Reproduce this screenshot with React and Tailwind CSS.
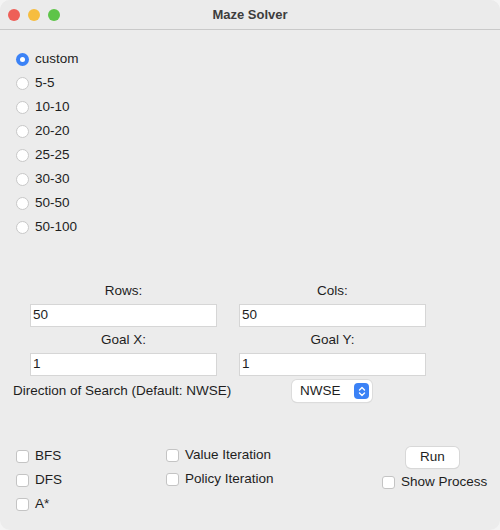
import { useState } from "react";

const sizes = ["custom", "5-5", "10-10", "20-20", "25-25", "30-30", "50-50", "50-100"];

function Radio({ checked }) {
  return checked ? (
    <span className="w-[13px] h-[13px] rounded-full bg-[#3b82f6] flex items-center justify-center shrink-0">
      <span className="w-[5px] h-[5px] rounded-full bg-white" />
    </span>
  ) : (
    <span className="w-[13px] h-[13px] rounded-full bg-white border border-[#c8c8c8] shrink-0" />
  );
}

function Check({ label, className = "" }) {
  return (
    <div className={"flex items-center h-[24px] " + className}>
      <span className="w-[13px] h-[13px] rounded-[3px] bg-white border border-[#c4c4c4] shrink-0" />
      <span className="ml-[6px]">{label}</span>
    </div>
  );
}

function Field({ label, value }) {
  return (
    <div className="flex flex-col items-center">
      <div className="h-[17px] leading-[17px]">{label}</div>
      <div className="w-[187px] h-[23px] mt-[5px] bg-white border border-[#d6d6d6] pl-[2px] flex items-center">
        {value}
      </div>
    </div>
  );
}

export default function App() {
  const [size, setSize] = useState("custom");

  return (
    <div className="w-[500px] h-[530px] bg-[#f4f4f4] font-['Liberation_Sans',Arial,sans-serif] text-[13.5px] text-[#1e1e1e]">
      <div className="w-full h-full bg-[#ececec] rounded-[10px] overflow-hidden flex flex-col">
        {/* barra de título */}
        <div className="h-[30px] border-b border-[#c9c9c9] bg-[#ebebeb] flex items-center relative shrink-0">
          <div className="flex gap-[8px] pl-[8px]">
            <span className="w-[12px] h-[12px] rounded-full bg-[#ee5f58]" />
            <span className="w-[12px] h-[12px] rounded-full bg-[#f6bd3f]" />
            <span className="w-[12px] h-[12px] rounded-full bg-[#5ec449]" />
          </div>
          <div className="absolute inset-0 flex items-center justify-center font-bold text-[13px] text-[#3d3d3d]">
            Maze Solver
          </div>
        </div>

        {/* tamaños */}
        <div className="pl-[16px] pt-[17px] flex flex-col">
          {sizes.map((s) => (
            <div
              key={s}
              className="flex items-center h-[24px] cursor-default"
              onClick={() => setSize(s)}
            >
              <Radio checked={size === s} />
              <span className="ml-[6px]">{s}</span>
            </div>
          ))}
        </div>

        {/* filas / columnas / objetivo */}
        <div className="mt-[43px] grid grid-cols-[187px_187px] gap-x-[22px] gap-y-[4px] pl-[30px]">
          <Field label="Rows:" value="50" />
          <Field label="Cols:" value="50" />
          <Field label="Goal X:" value="1" />
          <Field label="Goal Y:" value="1" />
        </div>

        <div className="flex items-center mt-[3px] pl-[13px] h-[24px]">
          <span className="w-[279px]">Direction of Search (Default: NWSE)</span>
          <div className="w-[80px] h-[22px] bg-white rounded-[5px] shadow-[0_0_0_1px_#dcdcdc,0_1px_1px_rgba(0,0,0,0.12)] flex items-center justify-between pl-[8px] pr-[3px]">
            <span>NWSE</span>
            <span className="w-[15px] h-[16px] rounded-[4px] bg-[#3b82f6] flex items-center justify-center">
              <svg width="8" height="11" viewBox="0 0 8 11" fill="none" stroke="white" strokeWidth="1.4" strokeLinecap="round" strokeLinejoin="round">
                <path d="M1.5 4 L4 1.5 L6.5 4" />
                <path d="M1.5 7 L4 9.5 L6.5 7" />
              </svg>
            </span>
          </div>
        </div>

        {/* algoritmos + ejecutar */}
        <div className="mt-[41px] flex pl-[16px]">
          <div className="w-[150px] flex flex-col">
            <Check label="BFS" />
            <Check label="DFS" />
            <Check label="A*" />
          </div>
          <div className="w-[216px] flex flex-col">
            <Check label="Value Iteration" className="-mt-[1px]" />
            <Check label="Policy Iteration" />
          </div>
          <div className="flex flex-col items-start">
            <button className="ml-[24px] mt-[3px] w-[53px] h-[21px] bg-white rounded-[5px] shadow-[0_0_0_1px_#d8d8d8,0_1px_1px_rgba(0,0,0,0.12)]">
              Run
            </button>
            <Check label="Show Process" className="mt-[2px]" />
          </div>
        </div>
      </div>
    </div>
  );
}
